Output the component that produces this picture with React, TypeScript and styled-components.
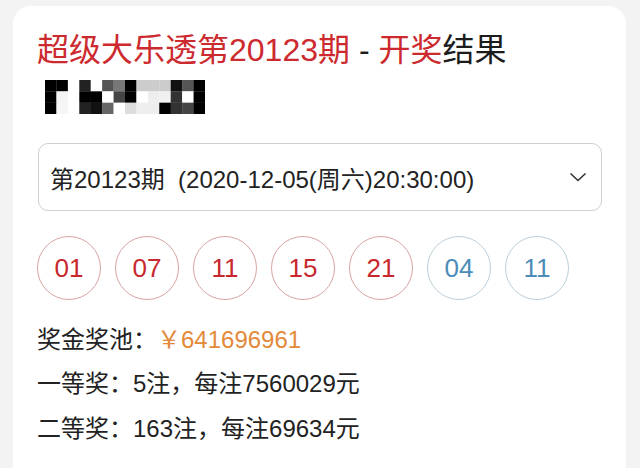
import React from "react";
import styled, { createGlobalStyle } from "styled-components";

const GlobalStyle = createGlobalStyle`
  html, body {
    margin: 0;
    padding: 0;
    background: #f3f3f3;
  }
  body {
    font-family: "Liberation Sans", "Noto Sans CJK SC", sans-serif;
    color: #222;
  }
`;

const Page = styled.div`
  width: 640px;
  height: 468px;
  overflow: hidden;
  padding-top: 6px;
  box-sizing: border-box;
`;

const Card = styled.div`
  margin: 0 14px 0 13px;
  min-height: 480px;
  background: #fff;
  border-radius: 18px 18px 0 0;
  padding: 24px 24px 0 24px;
  box-sizing: border-box;
`;

// title
const Title = styled.h1`
  margin: 0;
  font-size: 32px;
  line-height: 40px;
  font-weight: 400;
  color: #cc2a2e;
  white-space: nowrap;
`;
const Dark = styled.span`
  color: #1c1c1c;
`;

// censored name
const Mosaic = styled.svg`
  display: block;
  margin: 10px 0 0 8px;
`;

// issue selector
const Select = styled.div`
  margin-top: 29px;
  margin-left: 1px;
  width: 564px;
  height: 68px;
  box-sizing: border-box;
  border: 1px solid #cfcfcf;
  border-radius: 10px;
  display: flex;
  align-items: center;
  justify-content: space-between;
  padding: 0 14px 0 11px;
`;
const SelectText = styled.span`
  font-size: 24px;
  color: #222;
  white-space: pre;
`;

// balls
const BallRow = styled.div`
  margin-top: 25px;
  display: flex;
  gap: 14px;
`;
const Ball = styled.div<{ $blue?: boolean }>`
  width: 64px;
  height: 64px;
  box-sizing: border-box;
  border-radius: 50%;
  border: 1px solid ${(p) => (p.$blue ? "#bccfda" : "#d9a3a3")};
  color: ${(p) => (p.$blue ? "#4c8cb8" : "#c8282d")};
  font-size: 26px;
  display: flex;
  align-items: center;
  justify-content: center;
`;

// prize info
const InfoLine = styled.div<{ $gap: number }>`
  margin-top: ${(p) => p.$gap}px;
  font-size: 24px;
  line-height: 32px;
  color: #222;
  white-space: nowrap;
`;
const Money = styled.span`
  color: #e38a3a;
`;

const mosaic = [
  ["#000", "#000", "#fff", "#222", "#fff", "#555", "#777", "#000", "#ccc", "#ccc", "#ccc", "#111", "#555", "#000"],
  ["#000", "#f4f4f4", "#fff", "#000", "#000", "#fff", "#444", "#000", "#fff", "#eee", "#f0f0f0", "#333", "#fff", "#000"],
  ["#000", "#f6f6f6", "#fff", "#222", "#111", "#666", "#fff", "#ddd", "#eee", "#eee", "#000", "#333", "#444", "#000"],
];

const front = ["01", "07", "11", "15", "21"];
const back = ["04", "11"];

const App = () => {
  return (
    <Page>
      <GlobalStyle />
      <Card>
        <Title>
          超级大乐透第20123期 <Dark>-</Dark> 开奖<Dark>结果</Dark>
        </Title>
        <Mosaic width="160" height="34" viewBox="0 0 14 3" preserveAspectRatio="none">
          {mosaic.map((row, y) =>
            row.map((c, x) => <rect key={`${x}-${y}`} x={x} y={y} width="1.02" height="1.02" fill={c} />)
          )}
        </Mosaic>
        <Select>
          <SelectText>第20123期  (2020-12-05(周六)20:30:00)</SelectText>
          <svg width="18" height="10" viewBox="0 0 18 10">
            <polyline points="1.5,1.5 9,8.5 16.5,1.5" fill="none" stroke="#333" strokeWidth="1.6" />
          </svg>
        </Select>
        <BallRow>
          {front.map((n, i) => (
            <Ball key={`f${i}`}>{n}</Ball>
          ))}
          {back.map((n, i) => (
            <Ball key={`b${i}`} $blue>
              {n}
            </Ball>
          ))}
        </BallRow>
        <InfoLine $gap={24}>
          奖金奖池：<Money>￥641696961</Money>
        </InfoLine>
        <InfoLine $gap={12}>一等奖：5注，每注7560029元</InfoLine>
        <InfoLine $gap={13}>二等奖：163注，每注69634元</InfoLine>
      </Card>
    </Page>
  );
};

export default App;
